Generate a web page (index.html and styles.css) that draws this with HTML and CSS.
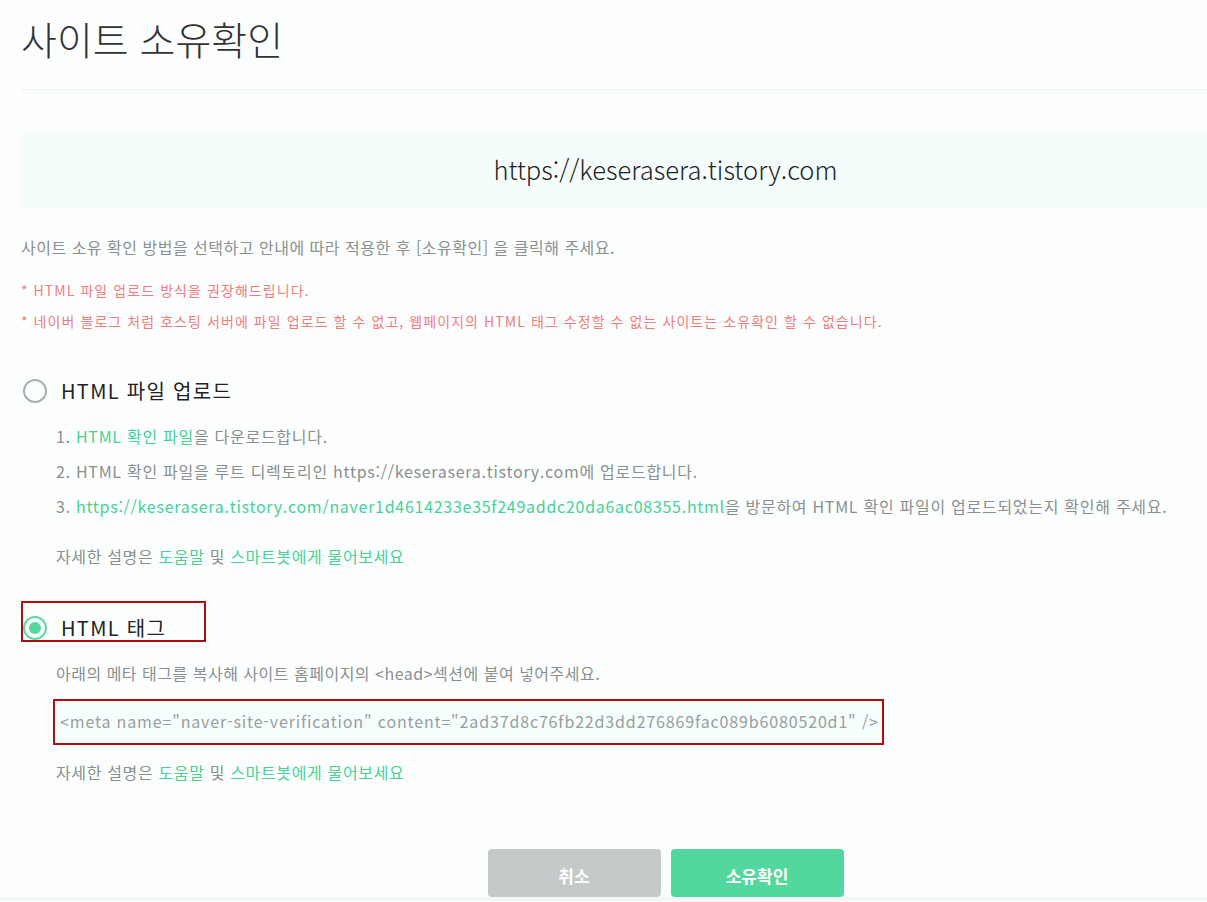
FILE: index.html
```html
<!DOCTYPE html>
<html lang="ko">
<head>
<meta charset="utf-8">
<title>사이트 소유확인</title>
<link rel="stylesheet" href="styles.css">
</head>
<body>
<div class="page">
  <h1 class="title">사이트 소유확인</h1>
  <div class="divider"></div>
  <div class="site-box">https://keserasera.tistory.com</div>
  <p class="guide">사이트 소유 확인 방법을 선택하고 안내에 따라 적용한 후 [소유확인] 을 클릭해 주세요.</p>
  <p class="warn warn-first">* HTML 파일 업로드 방식을 권장해드립니다.</p>
  <p class="warn warn-second">* 네이버 블로그 처럼 호스팅 서버에 파일 업로드 할 수 없고, 웹페이지의 HTML 태그 수정할 수 없는 사이트는 소유확인 할 수 없습니다.</p>

  <div class="option option-file">
    <span class="radio"></span>
    <span class="option-label">HTML 파일 업로드</span>
  </div>
  <ol class="steps">
    <li>1. <a class="link">HTML 확인 파일</a>을 다운로드합니다.</li>
    <li>2. HTML 확인 파일을 루트 디렉토리인 https://keserasera.tistory.com에 업로드합니다.</li>
    <li>3. <a class="link">https://keserasera.tistory.com/naver1d4614233e35f249addc20da6ac08355.html</a>을 방문하여 HTML 확인 파일이 업로드되었는지 확인해 주세요.</li>
  </ol>
  <p class="help help-file">자세한 설명은 <a class="link">도움말</a> 및 <a class="link">스마트봇에게 물어보세요</a></p>

  <div class="option option-tag">
    <span class="radio radio-on"></span>
    <span class="option-label">HTML 태그</span>
  </div>
  <p class="tag-desc">아래의 메타 태그를 복사해 사이트 홈페이지의 &lt;head&gt;섹션에 붙여 넣어주세요.</p>
  <div class="meta-box">&lt;meta name="naver-site-verification" content="2ad37d8c76fb22d3dd276869fac089b6080520d1" /&gt;</div>
  <p class="help help-tag">자세한 설명은 <a class="link">도움말</a> 및 <a class="link">스마트봇에게 물어보세요</a></p>

  <div class="actions">
    <button class="btn btn-cancel" type="button">취소</button>
    <button class="btn btn-confirm" type="button">소유확인</button>
  </div>
</div>
<div class="footer-strip"></div>
</body>
</html>
```

FILE: styles.css
```css
html, body {
  margin: 0;
  padding: 0;
}
body {
  background: #fcfefe;
  font-family: "Noto Sans CJK KR", "Noto Sans", sans-serif;
  overflow: hidden;
  width: 1207px;
  height: 902px;
}
.page {
  margin-left: 21px;
}
.title {
  margin: 0;
  padding-top: 15px;
  font-size: 39px;
  line-height: 46px;
  font-weight: 300;
  color: #333;
}
.divider {
  margin-top: 28px;
  border-top: 1px solid #eef1f1;
}
.site-box {
  margin-top: 44px;
  height: 74px;
  box-sizing: border-box;
  padding: 0 0 5px 103px;
  line-height: 69px;
  background: #f5fcfc;
  text-align: center;
  font-size: 25.5px;
  font-weight: 300;
  color: #222;
  white-space: nowrap;
}
p {
  margin: 0;
}
.guide {
  margin-top: 27px;
  font-size: 16px;
  letter-spacing: 0.5px;
  line-height: 24px;
  color: #8a8f8f;
}
.warn {
  font-size: 14px;
  letter-spacing: 1.07px;
  line-height: 20px;
  color: #f07d7d;
}
.warn-first { margin-top: 21px; }
.warn-second { margin-top: 11px; }
.option {
  display: flex;
  align-items: center;
  gap: 14px;
  padding-left: 2px;
}
.option-file {
  margin-top: 47px;
  height: 26px;
}
.radio {
  box-sizing: border-box;
  width: 24px;
  height: 24px;
  border: 2px solid #aab0b0;
  border-radius: 50%;
  flex: none;
  display: flex;
  align-items: center;
  justify-content: center;
}
.radio-on {
  border-color: #5fdaa5;
}
.radio-on::after {
  content: "";
  width: 12px;
  height: 12px;
  border-radius: 50%;
  background: #52d89e;
}
.option-label {
  font-size: 20px;
  letter-spacing: 1.3px;
  line-height: 26px;
  color: #222;
}
.steps {
  list-style: none;
  margin: 15px 0 0 0;
  padding-left: 35px;
}
.steps li {
  font-size: 16px;
  letter-spacing: 0.72px;
  line-height: 35px;
  color: #8a8f8f;
  white-space: nowrap;
}
.link {
  color: #47d195;
  text-decoration: none;
}
.help {
  padding-left: 35px;
  font-size: 16px;
  letter-spacing: 0.65px;
  line-height: 24px;
  color: #8a8f8f;
}
.help-file { margin-top: 20px; }
.option-tag {
  margin-top: 33px;
  box-sizing: border-box;
  width: 185px;
  height: 41px;
  border: 2px solid #b30c0c;
  padding-left: 0;
  padding-top: 12px;
}
.tag-desc {
  margin-top: 19px;
  padding-left: 35px;
  font-size: 16px;
  letter-spacing: 0.5px;
  line-height: 24px;
  color: #8a8f8f;
}
.meta-box {
  margin: 14px 0 0 32px;
  box-sizing: border-box;
  width: 831px;
  height: 46px;
  border: 2px solid #b30c0c;
  background: #f6fdfd;
  padding-left: 5px;
  font-size: 16px;
  letter-spacing: 0.85px;
  line-height: 41px;
  color: #999e9e;
  white-space: nowrap;
  overflow: hidden;
}
.help-tag { margin-top: 15px; }
.actions {
  margin-top: 65px;
  padding-left: 103px;
  display: flex;
  justify-content: center;
  gap: 10px;
}
.btn {
  width: 173px;
  height: 48px;
  border: none;
  border-radius: 4px;
  font-family: inherit;
  font-size: 17px;
  font-weight: 700;
  color: #fff;
  padding: 4px 0 0 0;
}
.btn-cancel { background: #c4c9c9; }
.btn-confirm { background: #52d89e; }
.footer-strip {
  height: 4px;
  background: #f3f6f6;
}
```
